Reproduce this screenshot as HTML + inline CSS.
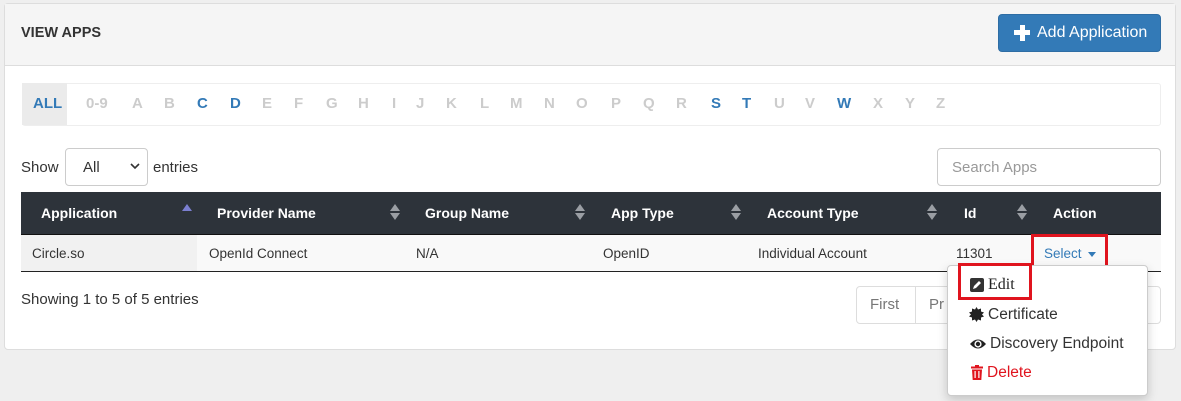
<!DOCTYPE html><html><head><style>
*{box-sizing:border-box;margin:0;padding:0}
body{width:1181px;height:401px;background:#efefef;font-family:"Liberation Sans",sans-serif;position:relative;overflow:hidden;font-size:14px;color:#333}
.a{position:absolute;white-space:nowrap}
.panel{left:4px;top:3px;width:1172px;height:347px;background:#fff;border:1px solid #ddd;border-radius:4px}
.hdr{left:5px;top:4px;width:1170px;height:62px;background:#f5f5f5;border-bottom:1px solid #ddd}
.ltr{top:95px;font-weight:bold;font-size:15px;color:#ccc}
.on{color:#337ab7}
.hd{top:205px;color:#fff;font-weight:bold;font-size:14px}
.cell{top:246px;font-size:13.5px;color:#333}
.sort{top:204px;width:10px;height:16px}
.sort:before{content:"";position:absolute;left:0;top:0;border-left:5px solid transparent;border-right:5px solid transparent;border-bottom:7px solid #9a9ea3}
.sort:after{content:"";position:absolute;left:0;top:9px;border-left:5px solid transparent;border-right:5px solid transparent;border-top:7px solid #9a9ea3}
</style></head><body>
<div class="a panel"></div>
<div class="a hdr"></div>
<div class="a" style="left:21px;top:25px;font-weight:bold;font-size:14.5px;color:#333">VIEW APPS</div>
<div class="a" style="left:998px;top:14px;width:163px;height:38px;background:#337ab7;border:1px solid #2e6da4;border-radius:4px;color:#fff;font-size:16px;padding:9px 0 0 38px">Add Application</div>
<div class="a" style="left:1014px;top:30px;width:16px;height:5px;background:#fff"></div>
<div class="a" style="left:1019.5px;top:24.5px;width:5px;height:16px;background:#fff"></div>
<div class="a" style="left:22px;top:83px;width:1139px;height:43px;border:1px solid #eee;border-radius:3px"></div>
<div class="a" style="left:22px;top:83px;width:45px;height:42px;background:#ebebeb"></div>
<div class="a ltr on" style="left:33px">ALL</div>
<div class="a ltr" style="left:86px">0-9</div>
<div class="a ltr" style="left:132px">A</div><div class="a ltr" style="left:164px">B</div><div class="a ltr on" style="left:197px">C</div><div class="a ltr on" style="left:230px">D</div><div class="a ltr" style="left:262px">E</div><div class="a ltr" style="left:294px">F</div><div class="a ltr" style="left:326px">G</div><div class="a ltr" style="left:358px">H</div><div class="a ltr" style="left:392px">I</div><div class="a ltr" style="left:416px">J</div><div class="a ltr" style="left:446px">K</div><div class="a ltr" style="left:480px">L</div><div class="a ltr" style="left:510px">M</div><div class="a ltr" style="left:544px">N</div><div class="a ltr" style="left:576px">O</div><div class="a ltr" style="left:611px">P</div><div class="a ltr" style="left:643px">Q</div><div class="a ltr" style="left:676px">R</div><div class="a ltr on" style="left:711px">S</div><div class="a ltr on" style="left:742px">T</div><div class="a ltr" style="left:774px">U</div><div class="a ltr" style="left:805px">V</div><div class="a ltr on" style="left:837px">W</div><div class="a ltr" style="left:873px">X</div><div class="a ltr" style="left:905px">Y</div><div class="a ltr" style="left:936px">Z</div>
<div class="a" style="left:21px;top:159px;font-size:15px">Show</div>
<div class="a" style="left:65px;top:148px;width:83px;height:38px;border:1px solid #ccc;border-radius:4px;font-size:15px;padding:10px 0 0 17px">All</div>
<svg class="a" style="left:130px;top:162px" width="10" height="8"><path d="M1 2 L5 6 L9 2" stroke="#333" stroke-width="1.6" fill="none"/></svg>
<div class="a" style="left:153px;top:159px;font-size:15px">entries</div>
<div class="a" style="left:937px;top:148px;width:224px;height:38px;border:1px solid #ccc;border-radius:4px;font-size:15px;color:#999;padding:10px 0 0 14px">Search Apps</div>
<div class="a" style="left:21px;top:192px;width:1140px;height:43px;background:#2d333a;border-bottom:1px solid #111"></div>
<div class="a hd" style="left:41px">Application</div>
<div class="a" style="left:182px;top:204px;border-left:5px solid transparent;border-right:5px solid transparent;border-bottom:7px solid #7b7fd0"></div>
<div class="a hd" style="left:217px">Provider Name</div><div class="a sort" style="left:390px"></div>
<div class="a hd" style="left:425px">Group Name</div><div class="a sort" style="left:575px"></div>
<div class="a hd" style="left:611px">App Type</div><div class="a sort" style="left:731px"></div>
<div class="a hd" style="left:767px">Account Type</div><div class="a sort" style="left:927px"></div>
<div class="a hd" style="left:964px">Id</div><div class="a sort" style="left:1017px"></div>
<div class="a hd" style="left:1053px">Action</div>
<div class="a" style="left:21px;top:235px;width:1140px;height:37px;background:#f9f9f9;border-bottom:1px solid #222"></div>
<div class="a" style="left:21px;top:235px;width:176px;height:36px;background:#f1f1f1"></div>
<div class="a cell" style="left:32px">Circle.so</div>
<div class="a cell" style="left:209px">OpenId Connect</div>
<div class="a cell" style="left:416px">N/A</div>
<div class="a cell" style="left:603px">OpenID</div>
<div class="a cell" style="left:758px">Individual Account</div>
<div class="a cell" style="left:956px">11301</div>
<div class="a cell" style="left:1044px;color:#337ab7">Select</div>
<div class="a" style="left:1088px;top:252px;border-left:4.5px solid transparent;border-right:4.5px solid transparent;border-top:5px solid #337ab7"></div>
<div class="a" style="left:1031px;top:234px;width:77px;height:35px;border:3px solid #e0141e"></div>
<div class="a" style="left:21px;top:291px;font-size:15px">Showing 1 to 5 of 5 entries</div>
<div class="a" style="left:856px;top:286px;width:305px;height:38px;border:1px solid #ddd;border-radius:4px"></div>
<div class="a" style="left:915px;top:287px;width:1px;height:36px;background:#ddd"></div>
<div class="a" style="left:870px;top:296px;font-size:15px;color:#777">First</div>
<div class="a" style="left:929px;top:296px;font-size:15px;color:#777">Pr</div>
<div class="a" style="left:947px;top:265px;width:201px;height:131px;background:#fff;border:1px solid #ccc;border-radius:4px;box-shadow:0 4px 10px rgba(0,0,0,.18)"></div>
<div class="a" style="left:958px;top:263px;width:74px;height:37px;border:3px solid #e0141e"></div>
<svg class="a" style="left:970px;top:278px" width="14" height="14"><rect x="0" y="0" width="14" height="14" rx="2" fill="#333"/><path d="M3 11 L4 8 L9 3 L11 5 L6 10 Z" fill="#fff"/></svg>
<div class="a" style="left:988px;top:276px;font-family:'Liberation Serif',serif;font-size:16px;color:#222">Edit</div>
<svg class="a" style="left:969px;top:307px" width="15" height="15"><path d="M7.5 0 L9 2.5 L12 1.5 L12 4.5 L15 5.5 L13 7.5 L15 9.5 L12 10.5 L12 13.5 L9 12.5 L7.5 15 L6 12.5 L3 13.5 L3 10.5 L0 9.5 L2 7.5 L0 5.5 L3 4.5 L3 1.5 L6 2.5 Z" fill="#222"/></svg>
<div class="a" style="left:988px;top:306px;font-size:15.5px;color:#333">Certificate</div>
<svg class="a" style="left:969px;top:338px" width="18" height="12"><path d="M1 6 Q9 -3 17 6 Q9 15 1 6 Z" fill="#222"/><circle cx="9" cy="6" r="3.6" fill="#fff"/><circle cx="9" cy="6" r="2.2" fill="#222"/></svg>
<div class="a" style="left:990px;top:335px;font-size:15.5px;color:#333">Discovery Endpoint</div>
<svg class="a" style="left:971px;top:365px" width="12" height="15"><rect x="0" y="1.5" width="12" height="2" fill="#e0141e"/><rect x="4" y="0" width="4" height="2" fill="#e0141e"/><path d="M1 4.5 H11 L10.3 15 H1.7 Z" fill="#e0141e"/><rect x="3.5" y="6" width="1.2" height="7" fill="#fff"/><rect x="7.3" y="6" width="1.2" height="7" fill="#fff"/></svg>
<div class="a" style="left:987px;top:364px;font-size:15.5px;color:#e0141e">Delete</div>
</body></html>
